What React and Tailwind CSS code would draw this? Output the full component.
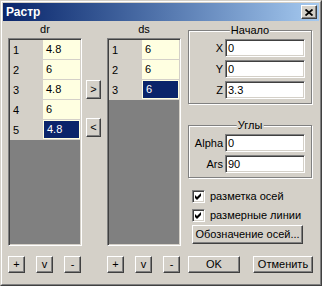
const sunken =
  "border border-t-[#808080] border-l-[#808080] border-b-white border-r-white shadow-[inset_1px_1px_0_#404040,inset_-1px_-1px_0_#d4d0c8]";
const raised =
  "border border-t-white border-l-white border-b-[#404040] border-r-[#404040] shadow-[inset_-1px_-1px_0_#808080] bg-[#d4d0c8]";

function Btn({ children, className = "" }) {
  return (
    <div className={`${raised} flex items-center justify-center leading-none ${className}`}>
      {children}
    </div>
  );
}

function Grid({ label, rows, selected }) {
  return (
    <div className="flex flex-col w-[74px]">
      <div className="h-[17px] flex items-center justify-center">{label}</div>
      <div className={`${sunken} h-[208px] bg-[#808080] p-[1px]`}>
        {rows.map((v, i) => (
          <div key={i} className="flex h-[20px] bg-[#d4d0c8]">
            <div className="w-[33px] pl-[3px] flex items-center">{i + 1}</div>
            <div className="flex-1 border-b border-[#d4d0c8]">
              <div
                className={`h-full flex items-center pl-[3px] ${
                  i === selected
                    ? "bg-[#0a246a] text-white border border-[#ffffe1]"
                    : "bg-[#ffffe1]"
                }`}
              >
                {v}
              </div>
            </div>
          </div>
        ))}
      </div>
      <div className="flex justify-between mt-[10px] pr-[1px]">
        <Btn className="w-[17px] h-[17px]">+</Btn>
        <Btn className="w-[17px] h-[17px]">v</Btn>
        <Btn className="w-[17px] h-[17px]">-</Btn>
      </div>
    </div>
  );
}

function Group({ title, children }) {
  return (
    <div className="relative border border-[#808080] shadow-[inset_1px_1px_0_white,1px_1px_0_white] w-[124px] pt-[8px] pb-[4px] pr-[6px] flex flex-col gap-[3px]">
      <span className="absolute -top-[7px] left-1/2 -translate-x-1/2 bg-[#d4d0c8] px-[1px] leading-[13px]">
        {title}
      </span>
      {children}
    </div>
  );
}

function Field({ label, value }) {
  return (
    <div className="flex justify-end items-center gap-[2px]">
      <span>{label}</span>
      <div className={`${sunken} bg-white w-[80px] h-[18px] flex items-center pl-[2px]`}>{value}</div>
    </div>
  );
}

function Check({ label }) {
  return (
    <div className="flex items-center gap-[5px] h-[13px] pl-[4px]">
      <div className={`${sunken} bg-white w-[13px] h-[13px] flex items-center justify-center`}>
        <svg width="9" height="9" viewBox="0 0 9 9">
          <polygon points="1,3 3,5 7,1 7,4 3,8 1,6" fill="black" />
        </svg>
      </div>
      <span>{label}</span>
    </div>
  );
}

export default function App() {
  return (
    <div
      className="w-[322px] h-[286px] bg-[#d4d0c8] border border-t-[#d4d0c8] border-l-[#d4d0c8] border-b-[#404040] border-r-[#404040] text-[11px] text-black"
      style={{ fontFamily: '"Liberation Sans", Arial, sans-serif' }}
    >
      <div className="h-full border border-t-white border-l-white border-b-[#808080] border-r-[#808080] p-[1px] flex flex-col">
        {/* title bar */}
        <div className="h-[18px] bg-gradient-to-r from-[#0a246a] to-[#a6caf0] flex items-center justify-between pl-[3px] pr-[2px]">
          <span className="text-white font-bold text-[12px]">Растр</span>
          <Btn className="w-[16px] h-[14px]">
            <svg width="8" height="7" viewBox="0 0 8 7">
              <path d="M0.5 0.5 L7.5 6.5 M7.5 0.5 L0.5 6.5" stroke="black" strokeWidth="1.8" />
            </svg>
          </Btn>
        </div>

        {/* body */}
        <div className="flex flex-1 pl-[5px] pr-[5px]">
          <Grid label="dr" rows={["4.8", "6", "4.8", "6", "4.8"]} selected={4} />
          <div className="w-[25px] flex flex-col items-start pl-[4px] pt-[59px] gap-[19px]">
            <Btn className="w-[15px] h-[19px]">&gt;</Btn>
            <Btn className="w-[15px] h-[19px]">&lt;</Btn>
          </div>
          <Grid label="ds" rows={["6", "6", "6"]} selected={2} />

          <div className="ml-[7px] pt-[9px] flex flex-col">
            <Group title="Начало">
              <Field label="X" value="0" />
              <Field label="Y" value="0" />
              <Field label="Z" value="3.3" />
            </Group>
            <div className="mt-[21px]">
              <Group title="Углы">
                <Field label="Alpha" value="0" />
                <Field label="Ars" value="90" />
              </Group>
            </div>
            <div className="mt-[12px] flex flex-col gap-[6px]">
              <Check label="разметка осей" />
              <Check label="размерные линии" />
            </div>
            <Btn className="mt-[3px] ml-[4px] w-[111px] h-[19px]">Обозначение осей...</Btn>
            <div className="mt-[12px] flex justify-between w-[125px]">
              <Btn className="w-[52px] h-[17px]">OK</Btn>
              <Btn className="w-[60px] h-[17px]">Отменить</Btn>
            </div>
          </div>
        </div>
      </div>
    </div>
  );
}
